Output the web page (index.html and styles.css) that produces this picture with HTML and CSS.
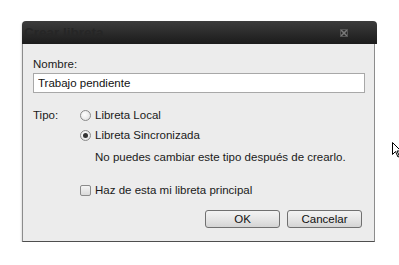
FILE: index.html
```html
<!DOCTYPE html>
<html lang="es">
<head>
    <meta charset="UTF-8">
    <title>Crear libreta</title>
    <link rel="stylesheet" href="styles.css">
</head>
<body>
    <div class="dialog">
        <div class="titlebar">
            <span class="title">Crear libreta</span>
            <svg class="close" width="8" height="8" viewBox="0 0 8 8">
                <path d="M1 1 L7 7 M7 1 L1 7" stroke="#7a7a7a" stroke-width="1.6"/>
                <rect x="0.5" y="0.5" width="7" height="7" fill="none" stroke="#555" stroke-width="1"/>
            </svg>
        </div>
        <div class="content">
            <label class="field-label" for="nombre">Nombre:</label>
            <input class="text-input" type="text" id="nombre" value="Trabajo pendiente">

            <div class="tipo">
                <span class="tipo-label">Tipo:</span>
                <div class="option"><span class="radio"></span>Libreta Local</div>
                <div class="option"><span class="radio checked"></span>Libreta Sincronizada</div>
                <div class="note">No puedes cambiar este tipo después de crearlo.</div>
            </div>

            <div class="check-row">
                <span class="checkbox"></span>Haz de esta mi libreta principal
            </div>

            <div class="buttons">
                <button class="btn">OK</button>
                <button class="btn">Cancelar</button>
            </div>
        </div>
    </div>

    <svg class="cursor" width="10" height="16" viewBox="0 0 10 16">
        <path d="M0.5 0.5 L0.5 12.5 L3.5 9.5 L6 15 L7.5 14.3 L5 9 L9 9 Z" fill="#fff" stroke="#000" stroke-width="1"/>
    </svg>
</body>
</html>
```

FILE: styles.css
```css
body {
    margin: 0;
    background-color: #fff;
    font-family: "Liberation Sans", sans-serif;
    font-size: 11.5px;
    color: #1a1a1a;
}
.dialog {
    width: 355px;
    margin: 21px 0 0 22px;
    box-shadow: -1px 1px 2px rgba(0, 0, 0, 0.12);
    border-radius: 4px 4px 0 0;
}
.titlebar {
    height: 23px;
    display: flex;
    align-items: center;
    justify-content: space-between;
    padding: 0 29px 0 2px;
    background: linear-gradient(#3c3c3c, #1b1b1b);
    border-radius: 4px 4px 0 0;
}
.title {
    font-size: 13.5px;
    font-weight: bold;
    color: #262626;
}
.close {
    display: block;
}
.content {
    background-color: #ececec;
    border: 1px solid #8c8c8c;
    border-top: none;
    border-bottom-color: #4e4e4e;
    margin-right: 2px;
    padding: 13px 12px 13px 10px;
}
.field-label {
    display: block;
    line-height: 14px;
    margin-bottom: 2px;
}
.text-input {
    display: block;
    box-sizing: border-box;
    width: 332px;
    height: 20px;
    margin: 0;
    padding: 0 4px;
    border: 1px solid #a8a8a8;
    background-color: #fff;
    font-family: "Liberation Sans", sans-serif;
    font-size: 11.5px;
    color: #111;
}
.tipo {
    display: grid;
    grid-template-columns: 47px 1fr;
    margin-top: 12px;
}
.tipo-label {
    line-height: 20px;
}
.option {
    grid-column: 2;
    display: flex;
    align-items: center;
    height: 20px;
}
.tipo .option:first-of-type {
    grid-row: 1;
}
.note {
    grid-column: 2;
    padding-left: 15px;
    margin-top: 5px;
    line-height: 14px;
}
.radio {
    box-sizing: border-box;
    width: 11px;
    height: 11px;
    margin-right: 4px;
    border: 1px solid #8a8a8a;
    border-radius: 50%;
    background: radial-gradient(circle at 40% 40%, #fff, #dcdcdc);
    display: flex;
    align-items: center;
    justify-content: center;
}
.radio.checked::after {
    content: "";
    width: 5px;
    height: 5px;
    border-radius: 50%;
    background-color: #333;
}
.check-row {
    display: flex;
    align-items: center;
    height: 20px;
    margin-top: 16px;
    padding-left: 47px;
}
.checkbox {
    box-sizing: border-box;
    width: 11px;
    height: 11px;
    margin-right: 4px;
    border: 1px solid #8a8a8a;
    border-radius: 2px;
    background: linear-gradient(#f4f4f4, #dadada);
}
.buttons {
    display: flex;
    justify-content: flex-end;
    gap: 7px;
    margin-top: 10px;
}
.btn {
    box-sizing: border-box;
    width: 75px;
    height: 18px;
    padding: 0;
    border: 1px solid #707070;
    border-radius: 3px;
    background: linear-gradient(#f3f3f3, #e6e6e6 50%, #d4d4d4);
    font-family: "Liberation Sans", sans-serif;
    font-size: 11.5px;
    color: #111;
}
.cursor {
    position: absolute;
    left: 392px;
    top: 142px;
}
```
